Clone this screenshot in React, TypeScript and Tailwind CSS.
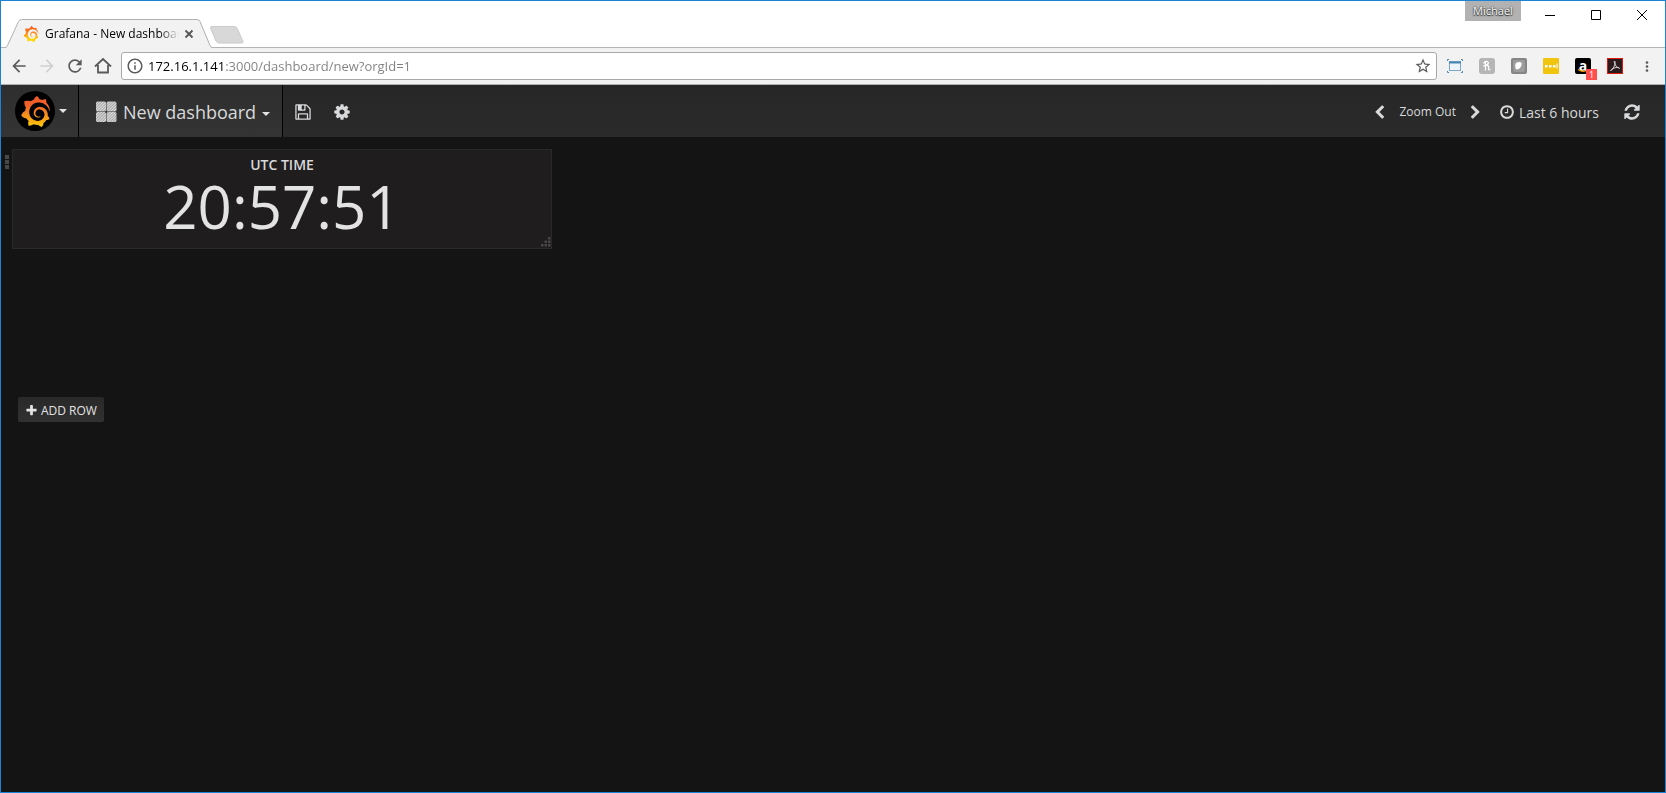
import type { ReactNode } from 'react';
import {
  MdArrowBack,
  MdArrowForward,
  MdInfoOutline,
  MdMoreVert,
  MdRefresh,
  MdStarBorder
} from 'react-icons/md';
import { SiGrafana } from 'react-icons/si';

const icons = {
  save: 'M512 1536h768v-384h-768v384zm896 0h128v-896q0-14-10-38.5t-20-34.5l-281-281q-10-10-34-20t-39-10v416q0 40-28 68t-68 28h-576q-40 0-68-28t-28-68v-416h-128v1280h128v-416q0-40 28-68t68-28h832q40 0 68 28t28 68v416zm-384-928v-320q0-13-9.5-22.5t-22.5-9.5h-192q-13 0-22.5 9.5t-9.5 22.5v320q0 13 9.5 22.5t22.5 9.5h192q13 0 22.5-9.5t9.5-22.5zm640 32v928q0 40-28 68t-68 28h-1344q-40 0-68-28t-28-68v-1344q0-40 28-68t68-28h928q40 0 88 20t76 48l280 280q28 28 48 76t20 88z',
  cog: 'M1152 896q0-106-75-181t-181-75-181 75-75 181 75 181 181 75 181-75 75-181zm512-109v222q0 12-8 23t-20 13l-185 28q-19 54-39 91 35 50 107 138 10 12 10 25t-9 23q-27 37-99 108t-94 71q-12 0-26-9l-138-108q-44 23-91 38-16 136-29 186-7 28-36 28h-222q-14 0-24.5-8.5t-11.5-21.5l-28-184q-49-16-90-37l-141 107q-10 9-25 9-14 0-25-11-126-114-165-168-7-10-7-23 0-12 8-23 15-21 51-66.5t54-70.5q-27-50-41-99l-183-27q-13-2-21-12.5t-8-23.5v-222q0-12 8-23t19-13l186-28q14-46 39-92-40-57-107-138-10-12-10-24 0-10 9-23 26-36 98.5-107.5t94.5-71.5q13 0 26 10l138 107q44-23 91-38 16-136 29-186 7-28 36-28h222q14 0 24.5 8.5t11.5 21.5l28 184q49 16 90 37l142-107q9-9 24-9 13 0 25 10 129 119 165 170 7 8 7 22 0 12-8 23-15 21-51 66.5t-54 70.5q26 50 41 98l183 28q13 2 21 12.5t8 23.5z',
  refresh: 'M1639 1056q0 5-1 7-64 268-268 434.5t-478 166.5q-146 0-282.5-55t-243.5-157l-129 129q-19 19-45 19t-45-19-19-45v-448q0-26 19-45t45-19h448q26 0 45 19t19 45-19 45l-137 137q71 66 161 102t187 36q134 0 250-65t186-179q11-17 53-117 8-23 30-23h192q13 0 22.5 9.5t9.5 22.5zm25-800v448q0 26-19 45t-45 19h-448q-26 0-45-19t-19-45 19-45l138-138q-148-137-349-137-134 0-250 65t-186 179q-11 17-53 117-8 23-30 23h-199q-13 0-22.5-9.5t-9.5-22.5v-7q65-268 270-434.5t480-166.5q146 0 284 55.5t245 156.5l130-129q19-19 45-19t45 19 19 45z',
  clock: 'M1024 544v448q0 14-9 23t-23 9h-320q-14 0-23-9t-9-23v-64q0-14 9-23t23-9h224v-352q0-14 9-23t23-9h64q14 0 23 9t9 23zm416 352q0-148-73-273t-198-198-273-73-273 73-198 198-73 273 73 273 198 198 273 73 273-73 198-198 73-273zm224 0q0 209-103 385.5t-279.5 279.5-385.5 103-385.5-103-279.5-279.5-103-385.5 103-385.5 279.5-279.5 385.5-103 385.5 103 279.5 279.5 103 385.5z',
  left: 'M1427 301l-531 531 531 531q19 19 19 45t-19 45l-166 166q-19 19-45 19t-45-19l-742-742q-19-19-19-45t19-45l742-742q19-19 45-19t45 19l166 166q19 19 19 45t-19 45z',
  right: 'M1363 877l-742 742q-19 19-45 19t-45-19l-166-166q-19-19-19-45t19-45l531-531-531-531q-19-19-19-45t19-45l166-166q19-19 45-19t45 19l742 742q19 19 19 45t-19 45z',
  plus: 'M1600 736v192q0 40-28 68t-68 28h-416v416q0 40-28 68t-68 28h-192q-40 0-68-28t-28-68v-416h-416q-40 0-68-28t-28-68v-192q0-40 28-68t68-28h416v-416q0-40 28-68t68-28h192q40 0 68 28t28 68v416h416q40 0 68 28t28 68z'
};

function Icon({ name, className }: { name: keyof typeof icons; className: string }) {
  return (
    <svg viewBox="0 0 1792 1792" fill="currentColor" className={className} aria-hidden="true">
      <path d={icons[name]} />
    </svg>
  );
}

function Caret() {
  return <span className="border-x-4 border-t-4 border-x-transparent border-t-[#e3e3e3]" />;
}

function IconButton({ label, className, children }: { label: string; className?: string; children: ReactNode }) {
  return (
    <button type="button" aria-label={label} className={`flex shrink-0 items-center justify-center ${className || ''}`}>
      {children}
    </button>
  );
}

// Gradients shared by the two logos
function LogoGradients() {
  return (
    <svg width="0" height="0" className="absolute" aria-hidden="true">
      <defs>
        <linearGradient id="logo" x1="0" y1="0" x2="0" y2="1">
          <stop offset="0" stopColor="#f05a28" />
          <stop offset="0.3" stopColor="#f2612a" />
          <stop offset="1" stopColor="#fbca0a" />
        </linearGradient>
        <linearGradient id="favicon" x1="0" y1="0" x2="0" y2="1">
          <stop offset="0" stopColor="#f4561c" />
          <stop offset="0.45" stopColor="#fa8a1c" />
          <stop offset="0.85" stopColor="#ffd800" />
        </linearGradient>
      </defs>
    </svg>
  );
}

function TitleBar() {
  return (
    <div className="flex h-[47px] items-start justify-between border-b border-[#b4b4b4] bg-white">
      <div className="flex h-[47px] items-end">
        <div className="relative ml-1 h-[29px] w-[207px]">
          <svg viewBox="0 0 207 29" className="absolute inset-0 h-full w-full" aria-hidden="true">
            <path d="M0 28.500H1.500L14 2.500Q15 0.500 17 0.500H192Q194 0.500 195 2.500L206.500 28.500V29H0Z" fill="#f2f2f2" />
            <path d="M0 28.500Q1.500 28.500 2.500 26.500L13.500 2.500Q14.500 0.500 16.500 0.500H192Q194 0.500 195 2.500L205 26.500Q206 28.500 207 28.500" fill="none" stroke="#b0b0b0" />
          </svg>
          <div className="relative flex h-full items-center pl-[18px]">
            <SiGrafana size={16} fill="url(#favicon)" />
            <span className="ml-1.5 w-[134px] overflow-hidden whitespace-nowrap text-[12px] text-black [mask-image:linear-gradient(to_right,black_114px,transparent)]">
              Grafana - New dashboard
            </span>
            <IconButton label="Close tab" className="ml-1 size-3">
              <svg viewBox="0 0 12 12" className="size-3" stroke="#555" strokeWidth="1.8"><path d="M2.500 2.500L9.500 9.500M9.500 2.500L2.500 9.500" /></svg>
            </IconButton>
          </div>
        </div>
        <IconButton label="New tab" className="-ml-1 mb-1 h-[18px]">
          <svg viewBox="0 0 36 18" className="h-[18px] w-9"><path d="M2.500 2Q2 0.500 4 0.500H26Q28 0.500 29 2L35 15.500Q35.500 17 33.500 17H11Q9 17 8 15Z" fill="#d8d8d8" stroke="#cacaca" /></svg>
        </IconButton>
      </div>
      <div className="flex items-start">
        <button type="button" className="h-5 w-14 bg-[#b2b2b2] text-[11px] leading-5 text-white [text-shadow:0_0_2px_#000,0_1px_1px_#333]">
          Michael
        </button>
        <IconButton label="Minimize" className="ml-1.5 h-7 w-[46px]">
          <svg viewBox="0 0 10 10" className="size-2.5" stroke="#000"><path d="M0 5.500H10" /></svg>
        </IconButton>
        <IconButton label="Maximize" className="h-7 w-[46px]">
          <svg viewBox="0 0 10 10" className="size-2.5" fill="none" stroke="#000"><path d="M0.500 0.500H9.500V9.500H0.500Z" /></svg>
        </IconButton>
        <IconButton label="Close" className="h-7 w-[46px]">
          <svg viewBox="0 0 10 10" className="size-2.5" stroke="#000"><path d="M0 0L10 10M10 0L0 10" /></svg>
        </IconButton>
      </div>
    </div>
  );
}

function Extensions() {
  return (
    <div className="flex items-center gap-4">
      <IconButton label="Window resizer">
        <svg viewBox="0 0 16 16" className="size-4" fill="none" stroke="#4a86b4">
          <path d="M0.500 3V1.500H2M14 1.500H15.500V3M15.500 13V14.500H14M2 14.500H0.500V13" />
          <rect x="2.500" y="3.500" width="11" height="9" fill="#eef5fa" stroke="#7ba7c9" />
          <path d="M2 4.500H14" strokeWidth="2" />
        </svg>
      </IconButton>
      <IconButton label="Honey">
        <svg viewBox="0 0 16 16" className="size-4">
          <rect width="16" height="16" rx="3" fill="#b5b5b5" />
          <path d="M6.500 3.500V12.500M4.500 5.500Q6 3 8 3.500Q10.500 4.500 8.500 6.500Q7.500 7.500 4.500 8M8 7.500Q10.500 7.500 9.500 10.500Q9.500 12.500 11.500 11.500" stroke="#fff" strokeWidth="1.300" fill="none" />
        </svg>
      </IconButton>
      <IconButton label="Blocker">
        <svg viewBox="0 0 16 16" className="size-4">
          <rect width="16" height="16" rx="2" fill="#858585" />
          <rect x="2" y="2" width="12" height="12" rx="2" fill="#9c9c9c" />
          <path d="M4.500 10Q3 4 8 4Q11.500 4 10.500 7Q9.500 11 6 11.500Q4.500 11.500 4.500 10Z" fill="#fff" />
        </svg>
      </IconButton>
      <IconButton label="Passwords">
        <svg viewBox="0 0 16 16" className="size-4">
          <rect width="16" height="16" rx="1" fill="#f1c40f" />
          <path d="M2 7h2.500v2.500h-2.500zM6 7h2.500v2.500h-2.500zM10 7h2.500v2.500h-2.500z" fill="#fff" />
          <path d="M14 5.500V10.500" stroke="#fff" />
        </svg>
      </IconButton>
      <button type="button" aria-label="Amazon" className="relative size-4 rounded-xs bg-black">
        <span className="block text-[14px] font-bold leading-[10px] text-white">a</span>
        <svg viewBox="0 0 16 16" className="absolute inset-0 size-4" fill="none"><path d="M3 11.500Q8 15 12.500 12" stroke="#f79400" strokeWidth="1.200" /></svg>
        <span className="absolute -bottom-1.5 -right-1.5 size-[11px] bg-[#ff4f4f] text-[9px] leading-[11px] text-white">1</span>
      </button>
      <IconButton label="Acrobat">
        <svg viewBox="0 0 16 16" className="size-4">
          <rect x="0.500" y="0.500" width="15" height="15" fill="#2d1a1c" stroke="#e0180c" />
          <path d="M7.500 3Q8.500 3 8 6Q8.500 9 12.500 10.500Q13 9 9 9.500Q4 10.500 3.500 12.500Q5.500 13 8 6Q6.500 3.500 7.500 3Z" fill="none" stroke="#ccc" />
        </svg>
      </IconButton>
      <IconButton label="Menu" className="w-4">
        <MdMoreVert size={19} />
      </IconButton>
    </div>
  );
}

function Toolbar() {
  return (
    <div className="flex h-[37px] items-center border-b border-[#b0b0b0] bg-[#f2f2f2] pl-2 pr-2.5 text-[#5a5a5a]">
      <div className="flex items-center gap-2">
        <IconButton label="Back"><MdArrowBack size={20} /></IconButton>
        <IconButton label="Forward" className="text-[#d0d0d0]"><MdArrowForward size={20} /></IconButton>
        <IconButton label="Reload"><MdRefresh size={20} /></IconButton>
        <IconButton label="Home">
          <svg viewBox="0 0 20 20" className="size-5" fill="none" stroke="currentColor" strokeWidth="1.800"><path d="M2 10.500L10 3L18 10.500M5 9V16.500H15V9" /></svg>
        </IconButton>
      </div>
      <div className="ml-2 flex h-7 flex-1 items-center rounded-[3px] border border-[#a9a9a9] bg-white px-1">
        <label htmlFor="address"><MdInfoOutline size={18} /></label>
        {/* host part is black, the rest of the address is grey */}
        <input
          id="address"
          aria-label="Address"
          defaultValue="172.16.1.141:3000/dashboard/new?orgId=1"
          className="ml-1 block min-w-0 flex-1 bg-[linear-gradient(to_right,#000_77px,#808080_77px)] bg-clip-text text-[13px] leading-5 text-transparent outline-none"
        />
        <IconButton label="Bookmark"><MdStarBorder size={18} /></IconButton>
      </div>
      <div className="ml-2.5"><Extensions /></div>
    </div>
  );
}

function DashboardIcon() {
  return (
    <svg viewBox="0 0 22 22" className="size-[22px]" aria-hidden="true">
      <defs>
        <pattern id="stripes" width="2" height="2" patternUnits="userSpaceOnUse" patternTransform="rotate(45)">
          <rect width="2" height="2" fill="#a4a4a4" />
          <rect width="1" height="2" fill="#dedede" />
        </pattern>
      </defs>
      {[0.5, 11].map(y => [1, 11.5].map(x => (
        <rect key={`${x}-${y}`} x={x} y={y} width="10" height="10" rx="1.500" fill="url(#stripes)" />
      )))}
    </svg>
  );
}

function NavBar() {
  return (
    <nav className="flex h-[52px] items-stretch bg-linear-to-b from-[#262626] to-[#2b2b2b] text-[#d8d9da]">
      <button type="button" aria-label="Main menu" className="flex w-[78px] items-center gap-1 border-r border-black bg-linear-to-b from-[#2e2e2e] to-[#343434] pl-3.5">
        <span className="flex size-10 items-center justify-center rounded-full bg-black">
          <SiGrafana size={31} fill="url(#logo)" />
        </span>
        <Caret />
      </button>
      <button type="button" className="flex items-center border-r border-black bg-linear-to-b from-[#2e2e2e] to-[#343434] pl-4 pr-3 pt-0.5 text-[18px]">
        <DashboardIcon />
        <span className="mx-1.5">New dashboard</span>
        <span className="mt-1 flex"><Caret /></span>
      </button>
      <IconButton label="Save dashboard" className="w-[39px] pt-0.5"><Icon name="save" className="size-[18px]" /></IconButton>
      <IconButton label="Settings" className="w-[39px] pt-0.5"><Icon name="cog" className="size-[18px]" /></IconButton>
      <div className="ml-auto flex items-center pr-6 pt-0.5">
        <IconButton label="Earlier"><Icon name="left" className="size-[15px]" /></IconButton>
        <button type="button" className="mx-3 text-[12px]">Zoom Out</button>
        <IconButton label="Later"><Icon name="right" className="size-[15px]" /></IconButton>
        <button type="button" className="ml-4 mr-6 flex items-center gap-1 text-[14px]">
          <Icon name="clock" className="size-4" />
          Last 6 hours
        </button>
        <IconButton label="Refresh"><Icon name="refresh" className="size-[18px]" /></IconButton>
      </div>
    </nav>
  );
}

function ClockPanel() {
  return (
    <section className="relative h-[100px] w-[540px] border border-[#292929] bg-[#1f1d1e] text-center">
      <h2 className="pt-[5px] text-[14px] font-semibold leading-5 text-[#d8d9da]">UTC TIME</h2>
      <p className="text-[60px] leading-[62px] text-[#e3e3e3]">20:57:51</p>
      <svg viewBox="0 0 10 10" className="absolute bottom-px right-0 size-2.5" fill="#484848" aria-hidden="true">
        <path d="M7 0h2.500v2.500h-2.500zM3.500 3.500h2.500v2.500h-2.500zM7 3.500h2.500v2.500h-2.500zM0 7h2.500v2.500h-2.500zM3.500 7h2.500v2.500h-2.500zM7 7h2.500v2.500h-2.500z" />
      </svg>
    </section>
  );
}

export default function App() {
  return (
    <div className="flex min-h-screen flex-col border border-[#1883d7] bg-[#141414] font-['Open_Sans',sans-serif]">
      <LogoGradients />
      <TitleBar />
      <Toolbar />
      <NavBar />
      <main>
        <div className="flex min-h-[248px] items-start pt-3">
          <button type="button" aria-label="Row menu" className="flex w-[11px] flex-col items-center gap-px pt-1.5">
            <span className="size-1 bg-[#484848]" />
            <span className="size-1 bg-[#484848]" />
            <span className="size-1 bg-[#484848]" />
          </button>
          <ClockPanel />
        </div>
        <button type="button" className="ml-[17px] mt-3 flex h-[25px] items-center gap-[3px] rounded-xs bg-linear-to-b from-[#292929] to-[#313131] px-[7px] pt-0.5 text-[12px] text-[#e3e3e3]">
          <Icon name="plus" className="size-[13px]" />
          ADD ROW
        </button>
      </main>
    </div>
  );
}
